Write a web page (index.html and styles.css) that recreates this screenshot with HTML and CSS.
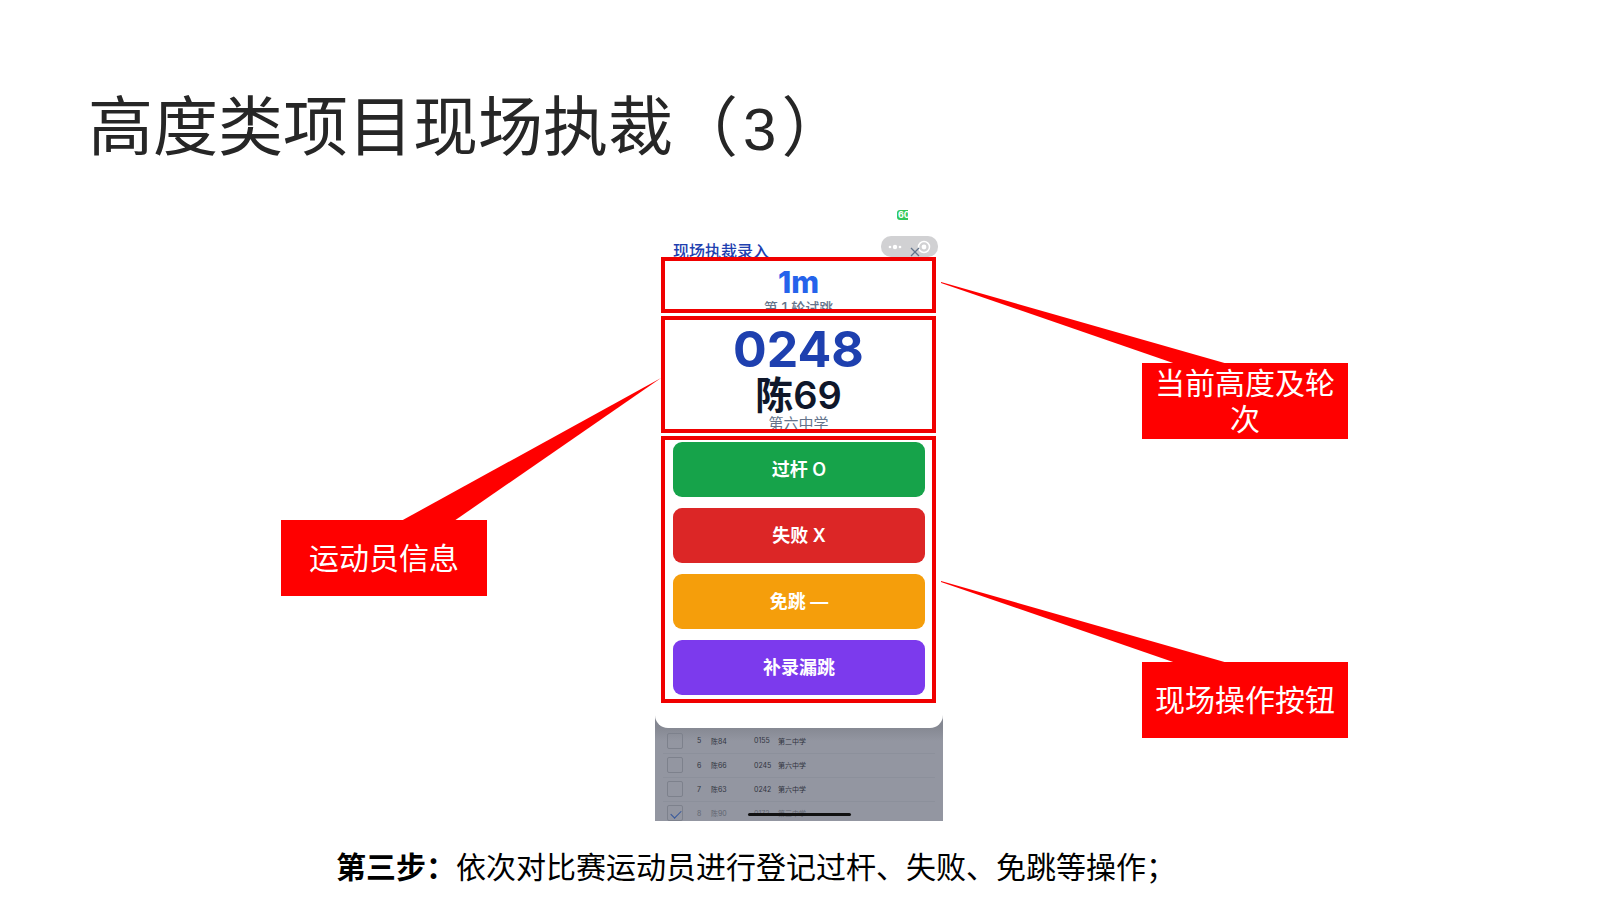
FILE: index.html
```
<!DOCTYPE html>
<html lang="zh-CN">
<head>
  <meta charset="UTF-8">
  <meta name="viewport" content="width=device-width, initial-scale=1">
  <title>高度类项目现场执裁（3）</title>
  <link rel="stylesheet" href="styles.css">
</head>
<body>

<h1>高度类项目现场执裁（<span class="part">3</span>）</h1>

<main class="stage">
  <!-- Left notes -->
  <div class="notes notes-left">
    <div class="callout">
      <svg class="tail tail-left" viewBox="0 0 260 143" aria-hidden="true"><path d="M0 143 L260 0 L53 143 Z"/></svg>
      运动员信息
    </div>
  </div>

  <!-- Phone -->
  <div class="phone">
    <div class="status"><span class="battery">60</span></div>
    <div class="nav">
      <h2>现场执裁录入</h2>
      <div class="capsule">
        <svg viewBox="0 0 57 21" aria-hidden="true">
          <g fill="#fff">
            <circle cx="9" cy="11" r="1.3"/><circle cx="14" cy="11" r="2.2"/><circle cx="19" cy="11" r="1.3"/>
            <circle cx="43" cy="11" r="2.4"/>
          </g>
          <circle cx="43" cy="11" r="5.5" fill="none" stroke="#fff" stroke-width="1.5"/>
          <path d="M30 12 L38 20 M38 12 L30 20" stroke="#64748b" stroke-width="1.3"/>
        </svg>
      </div>
    </div>

    <div class="sheet">
      <section class="box round">
        <div class="height">1m</div>
        <div class="attempt">第 1 轮试跳</div>
      </section>
      <section class="box athlete">
        <div class="bib">0248</div>
        <div class="name">陈69</div>
        <div class="school">第六中学</div>
      </section>
      <section class="box actions">
        <button class="pass" type="button">过杆 O</button>
        <button class="fail" type="button">失败 X</button>
        <button class="skip" type="button">免跳 —</button>
        <button class="makeup" type="button">补录漏跳</button>
      </section>
    </div>

    <div class="list">
      <table>
        <tr>
          <td class="check"><input type="checkbox" aria-label="陈84"></td>
          <td class="no">5</td><td class="who">陈84</td><td class="num">0155</td><td>第二中学</td>
        </tr>
        <tr>
          <td class="check"><input type="checkbox" aria-label="陈66"></td>
          <td class="no">6</td><td class="who">陈66</td><td class="num">0245</td><td>第六中学</td>
        </tr>
        <tr>
          <td class="check"><input type="checkbox" aria-label="陈63"></td>
          <td class="no">7</td><td class="who">陈63</td><td class="num">0242</td><td>第六中学</td>
        </tr>
        <tr class="done">
          <td class="check"><input type="checkbox" aria-label="陈90" checked></td>
          <td class="no">8</td><td class="who">陈90</td><td class="num">0172</td><td>第三中学</td>
        </tr>
      </table>
      <div class="home-bar"></div>
    </div>
  </div>

  <!-- Right notes -->
  <div class="notes notes-right">
    <div class="callout">
      <svg class="tail tail-right" viewBox="0 0 287 82" aria-hidden="true"><path d="M0 0 L287 82 L235 82 L0 1 Z"/></svg>
      当前高度及轮次
    </div>
    <div class="callout">
      <svg class="tail tail-right" viewBox="0 0 287 82" aria-hidden="true"><path d="M0 0 L287 82 L235 82 L0 1 Z"/></svg>
      现场操作按钮
    </div>
  </div>
</main>

<p class="step"><strong>第三步：</strong>依次对比赛运动员进行登记过杆、失败、免跳等操作；</p>

</body>
</html>
```
FILE: styles.css
```
* {
  box-sizing: border-box;
}
body {
  margin: 0;
  background: #fff;
  font-family: "Noto Sans CJK SC", sans-serif;
  color: #000;
}
h1 {
  margin: 0;
  padding: 76px 88px 0;
  height: 200px;
  font-size: 65px;
  line-height: 92px;
  font-weight: 400;
  color: #262626;
}
.part {
  padding: 0 5px;
  font-family: "Liberation Sans", sans-serif;
  font-size: 60px;
}
.stage {
  display: grid;
  grid-template-columns: 1fr 288px 1fr;
  padding-right: 2px;
}

/* callouts */
.notes {
  position: relative;
  z-index: 3;
  display: flex;
  flex-direction: column;
}
.notes-left {
  align-items: flex-end;
  padding: 320px 168px 0 0;
}
.notes-right {
  align-items: flex-start;
  gap: 223px;
  padding: 163px 0 0 199px;
}
.callout {
  position: relative;
  display: flex;
  align-items: center;
  justify-content: center;
  width: 206px;
  height: 76px;
  padding: 0 12px 5px;
  background: #f00;
  color: #fff;
  font-size: 30px;
  line-height: 36px;
  text-align: center;
}
.tail {
  position: absolute;
  fill: #f00;
}
.tail-left {
  left: 120px;
  bottom: 75px;
  width: 260px;
  height: 143px;
}
.tail-right {
  right: 120px;
  bottom: 75px;
  width: 287px;
  height: 82px;
}

/* phone */
.phone {
  font-family: Inter, "Noto Sans CJK SC", sans-serif;
}
.status {
  display: flex;
  justify-content: flex-end;
  height: 36px;
  padding: 10px 35px 0 0;
}
.battery {
  width: 11px;
  height: 10px;
  padding-left: 1px;
  overflow: hidden;
  border-radius: 3px 0 0 3px;
  background: #34c759;
  color: #fff;
  font-size: 9px;
  line-height: 10px;
  font-weight: 700;
}
.nav {
  display: flex;
  justify-content: space-between;
  height: 21px;
  padding: 0 5px 0 18px;
  overflow: hidden;
}
.nav h2 {
  margin: 0;
  padding-top: 3px;
  font-size: 16px;
  line-height: 24px;
  font-weight: 500;
  color: #1e40af;
}
.capsule {
  width: 57px;
  height: 21px;
  border-radius: 10px;
  background: #d1d1d3;
}
.capsule svg {
  display: block;
}
.sheet {
  position: relative;
  z-index: 2;
  display: flex;
  flex-direction: column;
  gap: 3px;
  padding: 0 7px 25px 6px;
  border-radius: 0 0 13px 13px;
  background: #fff;
}
.box {
  overflow: hidden;
  border: 4px solid #f00000;
  text-align: center;
}
.round {
  height: 56px;
  padding-top: 4px;
}
.height {
  font-size: 30px;
  line-height: 34px;
  font-weight: 800;
  color: #2563eb;
}
.attempt {
  font-size: 14px;
  line-height: 18px;
  font-weight: 500;
  color: #64748b;
}
.athlete {
  height: 117px;
  padding-top: 4px;
}
.bib {
  font-size: 50px;
  line-height: 50px;
  font-weight: 700;
  color: #1e40af;
}
.name {
  font-size: 38px;
  line-height: 42px;
  font-weight: 600;
  color: #0f172a;
}
.school {
  font-size: 15px;
  line-height: 16px;
  color: #64748b;
}
.actions {
  display: flex;
  flex-direction: column;
  gap: 11px;
  padding: 2px 7px 4px 8px;
}
.actions button {
  height: 55px;
  border: 0;
  border-radius: 9px;
  color: #fff;
  font-family: inherit;
  font-size: 18px;
  line-height: 24px;
  font-weight: 600;
}
.pass {
  background: #16a34a;
}
.fail {
  background: #dc2626;
}
.skip {
  background: #f59e0b;
}
.makeup {
  background: #7c3aed;
}

/* dimmed list behind the sheet */
.list {
  position: relative;
  height: 106px;
  margin-top: -13px;
  padding: 14px 8px 0;
  overflow: hidden;
  background: linear-gradient(#858892 12px, #9396a1 26px);
}
.list table {
  width: 100%;
  table-layout: fixed;
  border-collapse: collapse;
  font-size: 7px;
  color: #30343f;
}
.list td {
  height: 24px;
  padding: 0;
  border-bottom: 1px solid #8c909b;
}
.list .check {
  width: 31px;
  padding-left: 4px;
}
.list .no {
  width: 17px;
  padding-left: 3px;
}
.list .who {
  width: 43px;
}
.list .num {
  width: 24px;
}
.list input {
  display: block;
  appearance: none;
  width: 16px;
  height: 16px;
  margin: 0;
  border: 1px solid #7d818c;
  border-radius: 2px;
}
.list input:checked::before {
  content: "";
  display: block;
  width: 9px;
  height: 5px;
  margin: 4px 0 0 3px;
  border: solid #35579c;
  border-width: 0 0 1px 1px;
  transform: rotate(-45deg);
}
.done {
  color: #626671;
}
.home-bar {
  position: absolute;
  left: 93px;
  bottom: 5px;
  width: 103px;
  height: 3px;
  border-radius: 2px;
  background: #111;
}

.step {
  margin: 0;
  padding: 22px 21% 0;
  font-size: 30px;
  line-height: 44px;
  white-space: nowrap;
}
```
